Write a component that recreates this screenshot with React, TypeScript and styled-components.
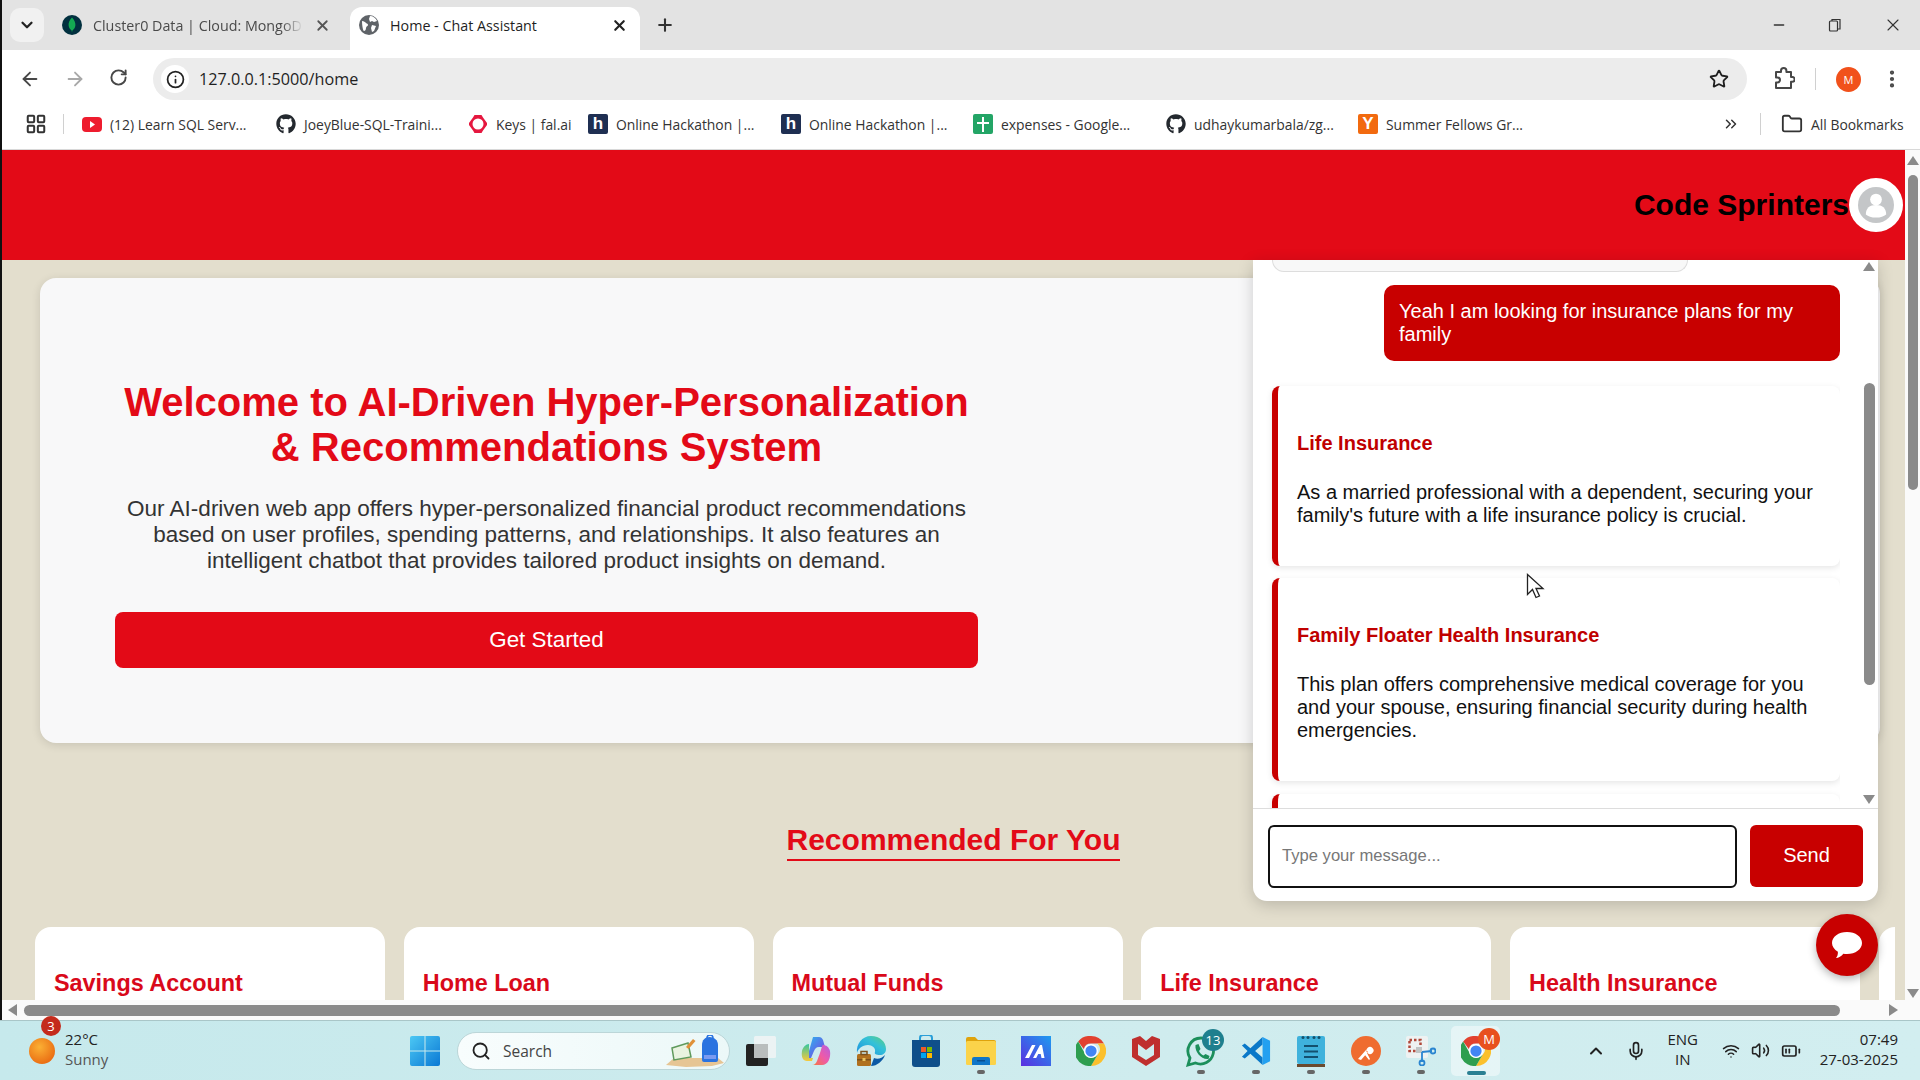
import React from 'react'
import styled, { createGlobalStyle } from 'styled-components'
import { FaGithub } from 'react-icons/fa'
import {
  ArrowLeft,
  ArrowRight,
  BatteryMedium,
  ChevronDown,
  ChevronsRight,
  ChevronUp,
  Folder,
  Info,
  LayoutGrid,
  Mic,
  Minus,
  MoreVertical,
  Plus,
  RotateCw,
  Search,
  Star,
  Volume2,
  Wifi,
  X,
} from 'lucide-react'

const GlobalStyle = createGlobalStyle`
  html, body {
    margin: 0;
    padding: 0;
    width: 1920px;
    height: 1080px;
    overflow: hidden;
    background: #000;
  }
  * { box-sizing: border-box; }
`

const Screen = styled.div`
  width: 1920px;
  height: 1080px;
  display: flex;
  flex-direction: column;
  font-family: 'Liberation Sans', Arial, sans-serif;
`

const Browser = styled.div`
  height: 1020px;
  display: flex;
  flex-direction: column;
  border-left: 2px solid #111;
  background: #fff;
`

const TabStrip = styled.div`
  height: 50px;
  flex: none;
  display: flex;
  align-items: flex-end;
  background: #e3e3e3;
  font-family: 'Open Sans', sans-serif;
  font-size: 14.3px;
`

const TabSearch = styled.div`
  width: 34px;
  height: 34px;
  margin: 0 0 8px 8px;
  border-radius: 10px;
  background: #f1f1f1;
  display: flex;
  align-items: center;
  justify-content: center;
  color: #222;
`

const Tab = styled.div`
  width: 290px;
  height: 43px;
  padding: 0 12px 7px 9px;
  display: flex;
  align-items: center;
  gap: 11px;
  border-radius: 12px 12px 0 0;
  background: #fff;
  color: #1f1f1f;
`

const InactiveTab = styled(Tab)`
  width: 306px;
  height: 36px;
  margin-bottom: 7px;
  padding: 0 19px 0 18px;
  background: transparent;
  color: #4a4a4a;
`

const TabTitle = styled.span<{ $fade?: boolean }>`
  flex: 1;
  overflow: hidden;
  white-space: nowrap;
  ${({ $fade }) =>
    $fade ? 'mask-image: linear-gradient(90deg, #000 90%, transparent 100%);' : ''}
`

const NewTab = styled.div`
  margin: 0 0 7px 15px;
  height: 36px;
  display: flex;
  align-items: center;
  color: #333;
`

const WindowControls = styled.div`
  margin-left: auto;
  height: 50px;
  display: flex;
  align-items: center;
  gap: 41px;
  padding-right: 17px;
  color: #333;
`

const Toolbar = styled.div`
  height: 56px;
  flex: none;
  padding: 8px 0 6px 17px;
  display: flex;
  align-items: center;
  background: #fff;
  color: #474747;
`

const NavButtons = styled.div`
  display: flex;
  gap: 23px;
  width: 134px;
`

const Omnibox = styled.div`
  width: 1594px;
  height: 42px;
  padding: 0 18px 0 8px;
  border-radius: 21px;
  background: #ececec;
  display: flex;
  align-items: center;
  gap: 10px;
  font-family: 'Open Sans', sans-serif;
  font-size: 16.2px;
  color: #1f1f1f;
`

const InfoBadge = styled.div`
  width: 28px;
  height: 28px;
  border-radius: 50%;
  background: #fff;
  display: flex;
  align-items: center;
  justify-content: center;
  color: #222;
`

const Url = styled.span`
  flex: 1;
`

const ToolbarEnd = styled.div`
  display: flex;
  align-items: center;
  margin-left: 26px;
  gap: 20px;
`

const Divider = styled.div<{ $height?: number }>`
  width: 1px;
  height: ${({ $height }) => $height ?? 22}px;
  background: #d0d0d0;
`

const GridDivider = styled(Divider)`
  margin: 0 18px 0 16px;
`

const ProfileDot = styled.div`
  width: 25px;
  height: 25px;
  border-radius: 50%;
  background: #f1511b;
  color: #fff;
  display: flex;
  align-items: center;
  justify-content: center;
  font-family: 'Open Sans', sans-serif;
  font-size: 11px;
`

const Bookmarks = styled.div`
  height: 44px;
  flex: none;
  padding: 0 14px 7px 23px;
  display: flex;
  align-items: center;
  background: #fff;
  border-bottom: 1px solid #d8d8d8;
  font-family: 'Open Sans', sans-serif;
  font-size: 13.9px;
  color: #333;
`

const BookmarkItem = styled.div<{ $width: number }>`
  width: ${({ $width }) => $width}px;
  flex: none;
  display: flex;
  align-items: center;
  gap: 8px;
  white-space: nowrap;
`

const BookmarkSpacer = styled.div`
  margin-left: auto;
  display: flex;
  align-items: center;
  gap: 20px;
`

const LetterIcon = styled.div<{ $bg: string }>`
  width: 20px;
  height: 20px;
  flex: none;
  border-radius: 2px;
  background: ${({ $bg }) => $bg};
  color: #fff;
  display: flex;
  align-items: center;
  justify-content: center;
  font: bold 17px 'Liberation Sans', sans-serif;
`

const Viewport = styled.div`
  flex: 1;
  min-height: 0;
  display: flex;
  flex-direction: column;
  position: relative;
`

const ViewRow = styled.div`
  flex: 1;
  min-height: 0;
  display: flex;
`

const Page = styled.div`
  flex: 1;
  min-width: 0;
  background: #e3decd;
  overflow: hidden;
`

const Header = styled.header`
  height: 110px;
  background: #e30a17;
  display: flex;
  align-items: center;
  justify-content: flex-end;
  padding-right: 2px;
`

const Brand = styled.div`
  font-size: 30px;
  font-weight: bold;
  color: #000;
`

const Avatar = styled.div`
  width: 54px;
  height: 54px;
  border-radius: 50%;
  background: #fff;
  display: flex;
  align-items: center;
  justify-content: center;
`

const Hero = styled.section`
  width: 1840px;
  height: 465px;
  margin: 18px 0 0 38px;
  padding: 102px 0 0 75px;
  background: #f8f8f9;
  border-radius: 16px;
  box-shadow: 0 2px 10px rgba(0, 0, 0, 0.12);
`

const HeroInner = styled.div`
  width: 863px;
  text-align: center;
`

const HeroTitle = styled.h1`
  margin: 0;
  font-size: 40px;
  line-height: 45px;
  font-weight: bold;
  color: #e30a17;
`

const HeroText = styled.p`
  margin: 26px 0 0;
  font-size: 22.5px;
  line-height: 26px;
  color: #333;
`

const GetStarted = styled.button`
  display: block;
  width: 863px;
  height: 56px;
  margin-top: 38px;
  border: 0;
  border-radius: 8px;
  background: #e30a17;
  color: #fff;
  font: 22.4px 'Liberation Sans', sans-serif;
`

const Section = styled.section`
  margin-top: 79px;
  text-align: center;
`

const SectionTitle = styled.h2`
  display: inline-block;
  margin: 0;
  padding-bottom: 1px;
  font-size: 30px;
  line-height: 36px;
  font-weight: bold;
  color: #e30a17;
  border-bottom: 2px solid #e30a17;
`

const CardRow = styled.div`
  width: 1860px;
  margin: 66px 0 0 33px;
  display: flex;
  gap: 18.75px;
  overflow: hidden;
`

const ProductCard = styled.article`
  width: 350px;
  height: 200px;
  flex: none;
  padding: 41px 19px;
  background: #fff;
  border-radius: 16px 16px 0 0;
  text-align: left;
  font-size: 23.4px;
  line-height: 30px;
  font-weight: bold;
  color: #d9091a;
`

const ScrollV = styled.div`
  width: 15px;
  flex: none;
  background: #fafafa;
  display: flex;
  flex-direction: column;
  align-items: center;
  justify-content: space-between;
  padding: 6px 0 2px;
`

const ScrollVThumb = styled.div`
  width: 10px;
  height: 315px;
  margin-bottom: auto;
  margin-top: 10px;
  border-radius: 5px;
  background: #8a8a8a;
`

const Arrow = styled.div<{ $dir: 'up' | 'down' | 'left' | 'right' }>`
  width: 0;
  height: 0;
  flex: none;
  border-style: solid;
  ${({ $dir }) =>
    $dir === 'up'
      ? 'border-width: 0 6px 9px; border-color: transparent transparent #8a8a8a;'
      : $dir === 'down'
        ? 'border-width: 9px 6px 0; border-color: #8a8a8a transparent transparent;'
        : $dir === 'left'
          ? 'border-width: 6px 9px 6px 0; border-color: transparent #8a8a8a transparent transparent;'
          : 'border-width: 6px 0 6px 9px; border-color: transparent transparent transparent #8a8a8a;'}
`

const ScrollH = styled.div`
  height: 20px;
  flex: none;
  background: #fafafa;
  display: flex;
  align-items: center;
  padding: 0 22px 0 6px;
`

const ScrollHThumb = styled.div`
  width: 1816px;
  height: 11px;
  margin: 0 auto 0 7px;
  border-radius: 6px;
  background: #8a8a8a;
`

const ChatPanel = styled.aside`
  position: absolute;
  left: 1251px;
  top: 110px;
  width: 625px;
  height: 641px;
  display: flex;
  flex-direction: column;
  background: #fff;
  border-radius: 0 0 14px 14px;
  box-shadow: 0 4px 16px rgba(0, 0, 0, 0.18);
`

const ChatBody = styled.div`
  flex: 1;
  min-height: 0;
  display: flex;
  border-bottom: 1px solid #ddd;
`

const Messages = styled.div`
  flex: 1;
  min-width: 0;
  padding: 0 0 0 19px;
  overflow: hidden;
  display: flex;
  flex-direction: column;
`

const CutBubble = styled.div`
  width: 416px;
  height: 12px;
  flex: none;
  background: #f8f8f8;
  border: 1px solid #ddd;
  border-top: 0;
  border-radius: 0 0 14px 14px;
`

const UserBubble = styled.div`
  width: 456px;
  height: 76px;
  flex: none;
  align-self: flex-end;
  margin-top: 13px;
  padding: 15px 15px;
  background: #c80000;
  border-radius: 10px;
  color: #fff;
  font-size: 20px;
  line-height: 23px;
`

const PlanCard = styled.div<{ $height: number; $gap: number }>`
  height: ${({ $height }) => $height}px;
  flex: none;
  margin-top: ${({ $gap }) => $gap}px;
  padding: 46px 20px 0 19px;
  background: #fff;
  border-left: 6px solid #c80000;
  border-radius: 8px;
  box-shadow: 0 2px 6px rgba(0, 0, 0, 0.1);
`

const PlanTitle = styled.div`
  font-size: 20px;
  line-height: 23px;
  font-weight: bold;
  color: #c00000;
`

const PlanText = styled.div`
  margin-top: 26px;
  font-size: 20px;
  line-height: 23px;
  color: #111;
`

const ChatScroll = styled.div`
  width: 38px;
  flex: none;
  padding: 2px 2px 4px 22px;
  display: flex;
  flex-direction: column;
  align-items: center;
`

const ChatThumb = styled.div`
  width: 11px;
  height: 302px;
  margin: 112px 0 auto;
  border-radius: 6px;
  background: #8a8a8a;
`

const ChatForm = styled.div`
  height: 92px;
  flex: none;
  padding: 16px 15px 15px;
  display: flex;
  gap: 13px;
`

const ChatInput = styled.div`
  width: 469px;
  height: 63px;
  padding: 0 12px 2px;
  border: 2px solid #111;
  border-radius: 6px;
  display: flex;
  align-items: center;
  font-size: 16.6px;
  color: #777;
`

const SendButton = styled.div`
  width: 113px;
  height: 62px;
  padding-bottom: 2px;
  border-radius: 6px;
  background: #c80000;
  color: #fff;
  display: flex;
  align-items: center;
  justify-content: center;
  font-size: 20px;
`

const ChatFab = styled.div`
  position: absolute;
  left: 1814px;
  top: 764px;
  width: 62px;
  height: 62px;
  border-radius: 50%;
  background: #c80000;
  box-shadow: 0 3px 8px rgba(0, 0, 0, 0.3);
  display: flex;
  align-items: center;
  justify-content: center;
`

const Cursor = styled.svg`
  position: absolute;
  left: 1524px;
  top: 423px;
`

const Taskbar = styled.footer`
  height: 60px;
  flex: none;
  display: flex;
  align-items: center;
  border-top: 1px solid #a9c6c8;
  background: linear-gradient(90deg, #c6e9ec 0%, #cfecee 60%, #d2eef0 100%);
  font-family: 'Open Sans', sans-serif;
  color: #222;
`

const Weather = styled.div`
  width: 397px;
  flex: none;
  padding-left: 29px;
  display: flex;
  align-items: center;
  gap: 10px;
  position: relative;
`

const WeatherText = styled.div`
  padding-bottom: 4px;
  font-size: 15px;
  line-height: 20px;
  span {
    display: block;
    color: #555;
  }
`

const WeatherBadge = styled.div`
  position: absolute;
  left: 41px;
  top: -13px;
  width: 20px;
  height: 20px;
  border-radius: 50%;
  background: #c42b1c;
  color: #fff;
  font-size: 13px;
  display: flex;
  align-items: center;
  justify-content: center;
`

const SearchBox = styled.div`
  width: 273px;
  height: 38px;
  flex: none;
  margin: 0 3px 0 5px;
  padding: 0 5px 0 13px;
  border: 1px solid #bcd6d8;
  border-radius: 19px;
  background: linear-gradient(90deg, #f8fdfd, #ecf8f8);
  display: flex;
  align-items: center;
  gap: 12px;
  font-size: 15.5px;
  color: #444;
`

const SearchArt = styled.div`
  margin-left: auto;
  display: flex;
`

const Slot = styled.div<{ $active?: boolean }>`
  width: 55px;
  height: 59px;
  flex: none;
  display: flex;
  align-items: center;
  justify-content: center;
  position: relative;
  ${({ $active }) =>
    $active
      ? 'background: rgba(255, 255, 255, 0.45); border-radius: 5px; width: 49px; margin: 0 3px; height: 50px;'
      : ''}
`

const RunDot = styled.div<{ $active?: boolean }>`
  position: absolute;
  left: 50%;
  bottom: ${({ $active }) => ($active ? '1px' : '6px')};
  width: ${({ $active }) => ($active ? '19px' : '8px')};
  height: 4px;
  margin-left: ${({ $active }) => ($active ? '-9px' : '-4px')};
  border-radius: 2px;
  background: ${({ $active }) => ($active ? '#2a8093' : '#666')};
`

const CountBadge = styled.div<{ $bg: string }>`
  position: absolute;
  right: ${({ $bg }) => ($bg === '#e8501e' ? '0' : '4px')};
  top: ${({ $bg }) => ($bg === '#e8501e' ? '2px' : '8px')};
  width: 22px;
  height: 22px;
  border-radius: 50%;
  background: ${({ $bg }) => $bg};
  color: #fff;
  font-size: 13px;
  display: flex;
  align-items: center;
  justify-content: center;
`

const Tray = styled.div`
  margin-left: auto;
  padding-right: 22px;
  display: flex;
  align-items: center;
  color: #222;
`

const Lang = styled.div`
  width: 40px;
  margin: 0 19px 0 17px;
  padding-bottom: 4px;
  text-align: center;
  font-size: 15px;
  line-height: 20px;
`

const TrayIcons = styled.div`
  display: flex;
  align-items: center;
  gap: 11px;
`

const Clock = styled.div`
  margin-left: 19px;
  padding-bottom: 4px;
  text-align: right;
  font-size: 15px;
  line-height: 20px;
`

const CaretSlot = styled.div`
  margin-right: 20px;
  display: flex;
`

const Leaf = () => (
  <svg width="20" height="20" viewBox="0 0 20 20">
    <circle cx="10" cy="10" r="10" fill="#01303f" />
    <path d="M10 2.500c2.600 3 3.600 5.200 3.400 7.800-.2 2.500-1.600 4.200-3 5.200l-.4 2-.4-2c-1.400-1-2.800-2.700-3-5.200C6.400 7.700 7.400 5.500 10 2.500z" fill="#13aa52" />
  </svg>
)

const GlobeIcon = () => (
  <svg width="20" height="20" viewBox="0 0 20 20">
    <circle cx="10" cy="10" r="10" fill="#5f6368" />
    <path d="M3 6c2 0 3 1 4 2s2 .5 2 2-2 1-2 3-1 3-2 3-2-6-2-10zM11 1c3 0 6 2 7 5l-3 1-2-1-2 1-1-3 1-3zM13 10l4 1-2 5-2 1-1-4z" fill="#fff" />
  </svg>
)

const Youtube = () => (
  <svg width="20" height="15" viewBox="0 0 20 15">
    <rect width="20" height="15" rx="4" fill="#ee1c2e" />
    <path d="M8 4l5 3.500L8 11z" fill="#fff" />
  </svg>
)

const FalIcon = () => (
  <svg width="20" height="20" viewBox="0 0 20 20">
    <path d="M6.500 1h7L15 3.500 19 9v2l-4 5.500L13.500 19h-7L5 16.500 1 11V9l4-5.500z" fill="#e5173f" />
    <circle cx="10" cy="10" r="5.500" fill="#fff" />
  </svg>
)

const SheetIcon = () => (
  <svg width="20" height="20" viewBox="0 0 20 20">
    <rect width="20" height="20" rx="2" fill="#23a566" />
    <path d="M9 3h2v5h5v2h-5v8H9v-8H4V8h5z" fill="#fff" />
  </svg>
)

const ExtensionIcon = () => (
  <svg width="22" height="24" viewBox="0 0 22 24" fill="none" stroke="#474747" strokeWidth="2" strokeLinejoin="round">
    <path d="M3 5h5V3.800a2.700 2.700 0 015.400 0V5H18v5h1.200a2.400 2.400 0 010 4.800H18V21H3v-5.500h1.500a2.500 2.500 0 000-5H3z" />
  </svg>
)

const UserIcon = () => (
  <svg width="36" height="36" viewBox="0 0 46 46">
    <circle cx="23" cy="23" r="23" fill="#c4c6c8" />
    <circle cx="23" cy="16" r="7.500" fill="#fff" />
    <path d="M10 35c0-8 5-12 13-12s13 4 13 12c-3 2.500-7 4-13 4s-10-1.500-13-4z" fill="#fff" />
  </svg>
)

const ChatIcon = () => (
  <svg width="34" height="30" viewBox="0 0 34 30">
    <path d="M17 2c8.500 0 15 4.800 15 11s-6.500 11-15 11c-1.300 0-2.500-.1-3.700-.3C11.500 26 8.500 28 6 28c1.300-1.500 2-3.500 1.900-6.300C4.300 19.600 2 16.500 2 13 2 6.800 8.500 2 17 2z" fill="#fff" />
  </svg>
)

const WeatherIcon = () => (
  <svg width="26" height="26" viewBox="0 0 26 26">
    <defs>
      <radialGradient id="sun" cx=".4" cy=".35" r=".75">
        <stop offset="0" stopColor="#fbb034" />
        <stop offset="1" stopColor="#e8650f" />
      </radialGradient>
    </defs>
    <circle cx="13" cy="13" r="13" fill="url(#sun)" />
  </svg>
)

const WindowsLogo = () => (
  <svg width="30" height="30" viewBox="0 0 30 30">
    <defs>
      <linearGradient id="win" x1="0" y1="0" x2="1" y2="1">
        <stop offset="0" stopColor="#4cc8f4" />
        <stop offset="1" stopColor="#0a78d4" />
      </linearGradient>
    </defs>
    <path d="M2 0h12.500v14.500H0V2a2 2 0 012-2zM15.500 0H28a2 2 0 012 2v12.500H15.500zM0 15.500h14.500V30H2a2 2 0 01-2-2zM15.500 15.500H30V28a2 2 0 01-2 2H15.500z" fill="url(#win)" />
  </svg>
)

const SearchDecor = () => (
  <svg width="58" height="32" viewBox="0 0 58 32">
    <path d="M0 30L8 23h44l6 5-12 3-26 1z" fill="#e6c594" />
    <path d="M6 13l16-5 3 14-17 3z" fill="#e9f3e0" stroke="#5f9a5c" strokeWidth="1.500" />
    <path d="M20 12l7-8 2.500 2-7 8z" fill="#e0913a" />
    <path d="M36 10c0-5 3-8 7.500-8S52 5 52 10v15a2 2 0 01-2 2H38a2 2 0 01-2-2z" fill="#2a73e0" />
    <path d="M38 20h12v4H38z" fill="#7a9af0" />
    <path d="M41 3a3 3 0 016 0" fill="none" stroke="#2a73e0" strokeWidth="1.500" />
  </svg>
)

const TaskView = () => (
  <svg width="30" height="30" viewBox="0 0 30 30">
    <rect y="8" width="22" height="22" rx="2" fill="#222" />
    <rect x="8" width="22" height="22" rx="1.500" fill="#f1f4f4" fillOpacity=".85" />
    <rect x="8" y="8" width="14" height="14" fill="#b9bdbd" />
  </svg>
)

const Copilot = () => (
  <svg width="30" height="30" viewBox="0 0 30 30">
    <defs>
      <linearGradient id="cpa" x1="0" y1="0" x2="1" y2="1">
        <stop offset="0" stopColor="#2bb8ee" />
        <stop offset=".6" stopColor="#5d6ce8" />
        <stop offset="1" stopColor="#a04fdc" />
      </linearGradient>
      <linearGradient id="cpb" x1="0" y1="1" x2="1" y2="0">
        <stop offset="0" stopColor="#f57a3c" />
        <stop offset=".5" stopColor="#ee5aa8" />
        <stop offset="1" stopColor="#b45fe0" />
      </linearGradient>
      <linearGradient id="cpc" x1="0" y1="0" x2="0" y2="1">
        <stop offset="0" stopColor="#35c7a0" />
        <stop offset="1" stopColor="#f8c93a" />
      </linearGradient>
    </defs>
    <path d="M12 1h6c2 0 3 1 4 3l2 7h-6c-3 0-4 2-5 4l-3 7H6z" fill="url(#cpa)" />
    <path d="M8 8c-3 0-6 3-7 7-1 6 1 10 5 10h5l1-3H8z" fill="url(#cpc)" />
    <path d="M22 9c3 0 6 2 7 6 1 7-2 14-8 14H11c3 0 4-2 5-4l3-8c1-3 2-8 3-8z" fill="url(#cpb)" />
  </svg>
)

const Edge = () => (
  <svg width="30" height="30" viewBox="0 0 30 30">
    <defs>
      <linearGradient id="edg" x1="0" y1="1" x2="1" y2="0">
        <stop offset="0" stopColor="#1a8fe0" />
        <stop offset=".6" stopColor="#34c1d8" />
        <stop offset="1" stopColor="#5fd07a" />
      </linearGradient>
    </defs>
    <path d="M15 0c9 0 15 6 15 13 0 4-3 6-6 6-4 0-6-1-5-3 1-4-3-7-7-7-6 0-10 4-11 8C0 8 6 0 15 0z" fill="url(#edg)" />
    <path d="M18 22c4 2 8 0 11-3-2 6-8 11-14 11z" fill="#0c59a4" />
    <rect x="1" y="18" width="14" height="12" rx="1.500" fill="#b0701e" />
    <rect x="5" y="15.500" width="6" height="3" fill="none" stroke="#7c5019" strokeWidth="1.500" />
    <rect x="1" y="23" width="14" height="1.500" fill="#7c5019" />
    <rect x="6.500" y="22" width="3" height="3" fill="#e8c25e" />
  </svg>
)

const Store = () => (
  <svg width="30" height="32" viewBox="0 0 30 32">
    <path d="M9 6V3a3 3 0 013-3h6a3 3 0 013 3v3" fill="none" stroke="#2a9fd8" strokeWidth="2" />
    <path d="M1 5h28v24a3 3 0 01-3 3H4a3 3 0 01-3-3z" fill="#0f4f8a" />
    <rect x="10" y="12" width="5" height="5" fill="#f05a28" />
    <rect x="16" y="12" width="5" height="5" fill="#7fba00" />
    <rect x="10" y="18" width="5" height="5" fill="#00a4ef" />
    <rect x="16" y="18" width="5" height="5" fill="#ffb900" />
  </svg>
)

const Explorer = () => (
  <svg width="30" height="28" viewBox="0 0 30 28">
    <path d="M0 2a2 2 0 012-2h7l3 3h16a2 2 0 012 2v4H0z" fill="#dfa30c" />
    <rect y="4" width="30" height="24" rx="1.500" fill="#fbd34a" />
    <path d="M6 22a2 2 0 012-2h14a2 2 0 012 2v6H6z" fill="#0f76c8" />
    <rect x="11" y="23" width="8" height="1.500" fill="#0a4f8f" />
  </svg>
)

const MApp = () => (
  <svg width="30" height="30" viewBox="0 0 30 30">
    <defs>
      <linearGradient id="mapp" x1="1" y1="0" x2="0" y2="1">
        <stop offset="0" stopColor="#1e9bf0" />
        <stop offset="1" stopColor="#5b2ee0" />
      </linearGradient>
    </defs>
    <rect width="30" height="30" fill="url(#mapp)" />
    <path d="M4 22l7-13h3.500L8 22zM12 22l7-13h2l2.500 13h-3l-.8-4h-2.500l-2 4z" fill="#fff" />
  </svg>
)

const ChromeIcon = ({ size = 30 }: { size?: number }) => (
  <svg width={size} height={size} viewBox="0 0 32 32">
    <path d="M16 0a16 16 0 0113.900 8H16a8 8 0 00-7.700 5.800L2.300 5.800A16 16 0 0116 0z" fill="#e2412f" />
    <path d="M29.900 8A16 16 0 0116 32l7-12a8 8 0 00-.1-12z" fill="#fbc02d" />
    <path d="M16 32A16 16 0 012.300 5.800l6.900 12.300A8 8 0 0023 20z" fill="#2e9e4f" />
    <circle cx="16" cy="16" r="7.500" fill="#fff" />
    <circle cx="16" cy="16" r="6" fill="#4285f4" />
  </svg>
)

const McAfee = () => (
  <svg width="28" height="30" viewBox="0 0 28 30">
    <path
      fillRule="evenodd"
      d="M0 3l8-3 6 5 6-5 8 3v18l-14 9-14-9zM6 8v11l8 5 8-5V8l-8 6z"
      fill="#bf2f2e"
    />
  </svg>
)

const Whatsapp = () => (
  <svg width="32" height="32" viewBox="0 0 32 32">
    <path d="M16 3a13 13 0 00-11 20L3 30l7.500-2A13 13 0 1016 3z" fill="none" stroke="#1c8f5b" strokeWidth="2.800" />
    <path d="M10.500 10l3-1 2 5-1.500 2c1 2 2.500 3.500 4.500 4.500l2-1.500 4 2-1 3c-7 1-14-7-13-14z" fill="#1c8f5b" />
  </svg>
)

const VsCode = () => (
  <svg width="30" height="30" viewBox="0 0 32 32">
    <path d="M1 10l3-2 6 5L23 1v8l-8 7 8 7v8L10 19l-6 5-3-2 6-6z" fill="#0a78c8" />
    <path d="M23 1l8 4v22l-8 4z" fill="#23a0f0" />
  </svg>
)

const Notepad = () => (
  <svg width="28" height="32" viewBox="0 0 28 32">
    <rect y="1" width="28" height="28" rx="2" fill="#3fb2dc" />
    <rect y="29" width="28" height="3" fill="#6b4a2e" />
    <circle cx="6" cy="2.500" r="1.500" fill="#15506b" />
    <circle cx="11" cy="2.500" r="1.500" fill="#15506b" />
    <circle cx="17" cy="2.500" r="1.500" fill="#15506b" />
    <circle cx="22" cy="2.500" r="1.500" fill="#15506b" />
    <path d="M7 11h14M7 16.500h14M7 22h14" stroke="#13506e" strokeWidth="2" />
  </svg>
)

const Postman = () => (
  <svg width="30" height="30" viewBox="0 0 30 30">
    <circle cx="15" cy="15" r="15" fill="#ef6c30" />
    <path d="M7 23l8-9 2 2-7 8zM16.500 12a3.500 3.500 0 105 0 3.500 3.500 0 00-5 0zM16 17l3 6-1 1-4-5z" fill="#fff" />
  </svg>
)

const Snip = () => (
  <svg width="30" height="30" viewBox="0 0 30 30">
    <rect width="22" height="22" rx="2" fill="#eef2f2" />
    <rect x="3.500" y="4" width="11" height="11" fill="none" stroke="#b0483a" strokeWidth="2.500" strokeDasharray="2.500 2" />
    <rect x="10" y="11" width="6" height="6" fill="#bfc4c4" />
    <path d="M16 16l0 10M16 16l10-1" stroke="#2b85d0" strokeWidth="1.800" fill="none" />
    <circle cx="16" cy="27" r="2.500" fill="none" stroke="#2b85d0" strokeWidth="1.800" />
    <circle cx="27" cy="15" r="2.500" fill="none" stroke="#2b85d0" strokeWidth="1.800" />
  </svg>
)

const bookmarks: { label: string; icon: React.ReactElement; width: number }[] = [
  { label: '(12) Learn SQL Serv...', icon: <Youtube />, width: 194 },
  { label: 'JoeyBlue-SQL-Traini...', icon: <FaGithub size={20} color="#24292f" />, width: 192 },
  { label: 'Keys | fal.ai', icon: <FalIcon />, width: 120 },
  { label: 'Online Hackathon |...', icon: <LetterIcon $bg="#1f2f52">h</LetterIcon>, width: 193 },
  { label: 'Online Hackathon |...', icon: <LetterIcon $bg="#1f2f52">h</LetterIcon>, width: 192 },
  { label: 'expenses - Google...', icon: <SheetIcon />, width: 193 },
  { label: 'udhaykumarbala/zg...', icon: <FaGithub size={20} color="#24292f" />, width: 192 },
  { label: 'Summer Fellows Gr...', icon: <LetterIcon $bg="#f26a0f">Y</LetterIcon>, width: 180 },
]

const taskApps: { key: string; icon: React.ReactElement; running?: boolean; badge?: string }[] = [
  { key: 'taskview', icon: <TaskView /> },
  { key: 'copilot', icon: <Copilot /> },
  { key: 'edge', icon: <Edge /> },
  { key: 'store', icon: <Store /> },
  { key: 'explorer', icon: <Explorer />, running: true },
  { key: 'mapp', icon: <MApp /> },
  { key: 'chrome', icon: <ChromeIcon /> },
  { key: 'mcafee', icon: <McAfee /> },
  { key: 'whatsapp', icon: <Whatsapp />, running: true, badge: '13' },
  { key: 'vscode', icon: <VsCode />, running: true },
  { key: 'notepad', icon: <Notepad />, running: true },
  { key: 'postman', icon: <Postman />, running: true },
  { key: 'snip', icon: <Snip />, running: true },
]

const products = ['Savings Account', 'Home Loan', 'Mutual Funds', 'Life Insurance', 'Health Insurance', '']

const App = () => {
  return (
    <Screen>
      <GlobalStyle />
      <Browser>
        <TabStrip>
          <TabSearch>
            <ChevronDown size={18} strokeWidth={3} />
          </TabSearch>
          <InactiveTab>
            <Leaf />
            <TabTitle $fade>Cluster0 Data | Cloud: MongoDB</TabTitle>
            <X size={17} strokeWidth={2.5} color="#555" />
          </InactiveTab>
          <Tab>
            <GlobeIcon />
            <TabTitle>Home - Chat Assistant</TabTitle>
            <X size={17} strokeWidth={3} color="#222" />
          </Tab>
          <NewTab>
            <Plus size={20} strokeWidth={2.5} />
          </NewTab>
          <WindowControls>
            <Minus size={16} />
            <svg width="14" height="14" viewBox="0 0 14 14" fill="none" stroke="#333" strokeWidth="1.2">
              <rect x="1.500" y="3" width="8" height="10" rx="1" />
              <path d="M4 3V1.500h8V11h-2.500" />
            </svg>
            <X size={20} strokeWidth={1.3} />
          </WindowControls>
        </TabStrip>

        <Toolbar>
          <NavButtons>
            <ArrowLeft size={22} />
            <ArrowRight size={22} color="#a8a8a8" />
            <RotateCw size={19} strokeWidth={2.4} />
          </NavButtons>
          <Omnibox>
            <InfoBadge>
              <Info size={19} strokeWidth={2.2} />
            </InfoBadge>
            <Url>127.0.0.1:5000/home</Url>
            <Star size={20} strokeWidth={2.2} />
          </Omnibox>
          <ToolbarEnd>
            <ExtensionIcon />
            <Divider />
            <ProfileDot>M</ProfileDot>
            <MoreVertical size={22} strokeWidth={2.6} />
          </ToolbarEnd>
        </Toolbar>

        <Bookmarks>
          <LayoutGrid size={22} strokeWidth={2.2} />
          <GridDivider $height={20} />
          {bookmarks.map((b, i) => (
            <BookmarkItem key={i} $width={b.width}>
              {b.icon}
              {b.label}
            </BookmarkItem>
          ))}
          <BookmarkSpacer>
            <ChevronsRight size={18} />
            <Divider $height={22} />
            <BookmarkItem $width={125}>
              <Folder size={22} />
              All Bookmarks
            </BookmarkItem>
          </BookmarkSpacer>
        </Bookmarks>

        <Viewport>
          <ViewRow>
            <Page>
              <Header>
                <Brand>Code Sprinters</Brand>
                <Avatar>
                  <UserIcon />
                </Avatar>
              </Header>

              <Hero>
                <HeroInner>
                  <HeroTitle>
                    Welcome to AI-Driven Hyper-Personalization
                    <br />& Recommendations System
                  </HeroTitle>
                  <HeroText>
                    Our AI-driven web app offers hyper-personalized financial product recommendations based on user
                    profiles, spending patterns, and relationships. It also features an intelligent chatbot that
                    provides tailored product insights on demand.
                  </HeroText>
                  <GetStarted>Get Started</GetStarted>
                </HeroInner>
              </Hero>

              <Section>
                <SectionTitle>Recommended For You</SectionTitle>
                <CardRow>
                  {products.map((p, i) => (
                    <ProductCard key={i}>{p}</ProductCard>
                  ))}
                </CardRow>
              </Section>
            </Page>
            <ScrollV>
              <Arrow $dir="up" />
              <ScrollVThumb />
              <Arrow $dir="down" />
            </ScrollV>
          </ViewRow>
          <ScrollH>
            <Arrow $dir="left" />
            <ScrollHThumb />
            <Arrow $dir="right" />
          </ScrollH>

          <ChatPanel>
            <ChatBody>
              <Messages>
                <CutBubble />
                <UserBubble>Yeah I am looking for insurance plans for my family</UserBubble>
                <PlanCard $height={180} $gap={25}>
                  <PlanTitle>Life Insurance</PlanTitle>
                  <PlanText>
                    As a married professional with a dependent, securing your family's future with a life insurance
                    policy is crucial.
                  </PlanText>
                </PlanCard>
                <PlanCard $height={203} $gap={12}>
                  <PlanTitle>Family Floater Health Insurance</PlanTitle>
                  <PlanText>
                    This plan offers comprehensive medical coverage for you and your spouse, ensuring financial
                    security during health emergencies.
                  </PlanText>
                </PlanCard>
                <PlanCard $height={180} $gap={13} />
              </Messages>
              <ChatScroll>
                <Arrow $dir="up" />
                <ChatThumb />
                <Arrow $dir="down" />
              </ChatScroll>
            </ChatBody>
            <ChatForm>
              <ChatInput>Type your message...</ChatInput>
              <SendButton>Send</SendButton>
            </ChatForm>
          </ChatPanel>
          <ChatFab>
            <ChatIcon />
          </ChatFab>
          <Cursor width="20" height="28" viewBox="0 0 20 28">
            <path d="M1.500 1.500v20l5-5 3.500 8 3.500-1.500-3.500-7.500h7z" fill="#fff" stroke="#222" strokeWidth="1.300" />
          </Cursor>
        </Viewport>
      </Browser>

      <Taskbar>
        <Weather>
          <WeatherIcon />
          <WeatherBadge>3</WeatherBadge>
          <WeatherText>
            22°C
            <span>Sunny</span>
          </WeatherText>
        </Weather>
        <Slot>
          <WindowsLogo />
        </Slot>
        <SearchBox>
          <Search size={20} strokeWidth={2.2} color="#222" />
          Search
          <SearchArt>
            <SearchDecor />
          </SearchArt>
        </SearchBox>
        {taskApps.map((a) => (
          <Slot key={a.key}>
            {a.icon}
            {a.badge && <CountBadge $bg="#1e7f8e">{a.badge}</CountBadge>}
            {a.running && <RunDot />}
          </Slot>
        ))}
        <Slot $active>
          <ChromeIcon />
          <CountBadge $bg="#e8501e">M</CountBadge>
          <RunDot $active />
        </Slot>
        <Tray>
          <CaretSlot>
            <ChevronUp size={20} strokeWidth={2.4} />
          </CaretSlot>
          <Mic size={20} />
          <Lang>
            ENG
            <br />
            IN
          </Lang>
          <TrayIcons>
            <Wifi size={18} />
            <Volume2 size={19} />
            <BatteryMedium size={20} />
          </TrayIcons>
          <Clock>
            07:49
            <br />
            27-03-2025
          </Clock>
        </Tray>
      </Taskbar>
    </Screen>
  )
}

export default App
